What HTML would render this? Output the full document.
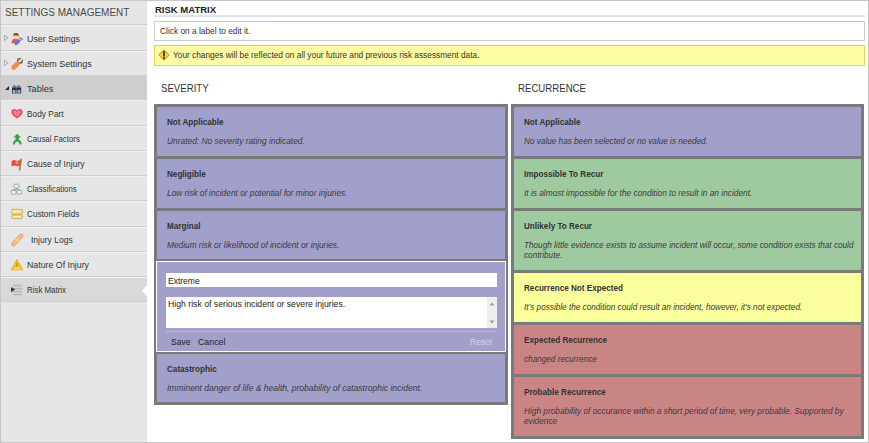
<!DOCTYPE html>
<html><head><meta charset="utf-8">
<style>
*{margin:0;padding:0;box-sizing:border-box}
html,body{width:869px;height:443px;overflow:hidden;background:#fff;font-family:"Liberation Sans",sans-serif;color:#333}
.a{position:absolute}
#frame{left:0;top:0;width:869px;height:443px;border:1px solid #c6c6c6;z-index:50;pointer-events:none}
#side{left:0;top:0;width:147px;height:443px;background:#e6e6e6}
.hd{left:5px;top:6px;font-size:10px;color:#4a4a4a;white-space:nowrap;line-height:14px}
.sep{left:1px;width:146px;height:1px;background:#cfcfcf}
.sepl{left:1px;width:146px;height:1px;background:#f0f0f0}
.row{left:1px;width:146px;background:#cecece}
.it{transform-origin:0 0;left:27px;font-size:9px;color:#333;white-space:nowrap;line-height:12px}
.ic{left:11px;width:12px;height:12px}
.tri{left:4px;width:5px;height:6px}
.title{left:155px;top:3.5px;font-size:9.5px;letter-spacing:0;font-weight:bold;color:#222;line-height:12px;white-space:nowrap}
.uline{left:154px;top:15px;width:711px;height:2px;background:#dbe4f3}
.box1{left:154px;top:21px;width:711px;height:20px;border:1px solid #cacaca;background:#fff}
.t1{left:160px;top:26px;font-size:8.35px;color:#333;line-height:11px;white-space:nowrap}
.notice{left:154px;top:45px;width:711px;height:21px;border:1px solid #e3d35a;background:#fdfba3}
.t2{left:173px;top:50px;font-size:8.3px;color:#333;line-height:11px;white-space:nowrap}
.h2{font-size:10.5px;transform:scaleX(0.918);transform-origin:0 0;color:#333;line-height:12px;white-space:nowrap;top:82px}
.panel{border:3px solid #7a7a7a;background:#7a7a7a}
.r{position:absolute;left:0;right:0}
.lav{background:#a0a0cb}.grn{background:#9fca9f}.yel{background:#fbfe9c}.red{background:#c98584}
.rt{position:absolute;left:10px;top:10px;font-size:8.15px;font-weight:bold;color:#333;line-height:11px;white-space:nowrap}
.rd{position:absolute;left:10px;right:3px;top:29.5px;font-size:8.2px;font-style:italic;color:#3a3a3a;line-height:10.4px}
.ed{font-size:8.5px;color:#222;line-height:10px;white-space:nowrap}
</style></head><body>
<div id="frame" class="a"></div>
<div id="side" class="a">
  <div class="a hd">SETTINGS MANAGEMENT</div>
  <div class="a sep" style="top:24px"></div><div class="a sepl" style="top:25px"></div>
  <div class="a sep" style="top:50px"></div><div class="a sepl" style="top:51px"></div>
  <div class="a sep" style="top:75px"></div>
  <div class="a row" style="top:76px;height:24px"></div>
  <div class="a sepl" style="top:100px"></div>
  <div class="a sep" style="top:125px"></div><div class="a sepl" style="top:126px"></div>
  <div class="a sep" style="top:150px"></div><div class="a sepl" style="top:151px"></div>
  <div class="a sep" style="top:175px"></div><div class="a sepl" style="top:176px"></div>
  <div class="a sep" style="top:200px"></div><div class="a sepl" style="top:201px"></div>
  <div class="a sep" style="top:226px"></div><div class="a sepl" style="top:227px"></div>
  <div class="a sep" style="top:251px"></div><div class="a sepl" style="top:252px"></div>
  <div class="a sep" style="top:276px"></div><div class="a sepl" style="top:277px"></div>
  <div class="a row" style="top:278px;height:23px;background:#d9d9d9"></div>
  <div class="a sep" style="top:301px"></div>

  <div class="a it" style="top:33px;transform:scaleX(0.981)">User Settings</div>
  <div class="a it" style="top:58px;transform:scaleX(0.994)">System Settings</div>
  <div class="a it" style="top:83px;transform:scaleX(1.015)">Tables</div>
  <div class="a it" style="top:108px;transform:scaleX(0.927)">Body Part</div>
  <div class="a it" style="top:133px;transform:scaleX(0.873)">Causal Factors</div>
  <div class="a it" style="top:158px;transform:scaleX(0.950)">Cause of Injury</div>
  <div class="a it" style="top:183px;transform:scaleX(0.863)">Classifications</div>
  <div class="a it" style="top:208px;transform:scaleX(0.910)">Custom Fields</div>
  <div class="a it" style="top:234px;left:31px;transform:scaleX(0.948)">Injury Logs</div>
  <div class="a it" style="top:259px;transform:scaleX(0.976)">Nature Of Injury</div>
  <div class="a it" style="top:284px;transform:scaleX(0.876)">Risk Matrix</div>

  <svg class="a" style="left:0;top:25px" width="30" height="24">
    <path d="M4.5 10.2 L8.2 12.9 L4.5 15.6 Z" fill="none" stroke="#a8a8a8" stroke-width="0.9"/>
    <path d="M19.8 12.6 L22.6 14.2 L19.8 15.8 Z" fill="none" stroke="#9a9a9a" stroke-width="1.1"/>
    <path d="M11.4 18.2 Q11.6 13.6 15.6 13.2 Q19.6 13.6 19.8 18.2 Z" fill="#e9525c"/>
    <circle cx="16" cy="12" r="2.3" fill="#f6cfa6"/>
    <path d="M13.2 11.4 Q13 8 16 8 Q19 8 18.8 11.4 Q17.5 9.6 16 10.4 Q14.5 9.6 13.2 11.4 Z" fill="#8a3a18"/>
    <path d="M16 18.6 L18.6 16" stroke="#4a80dc" stroke-width="3" stroke-linecap="round"/>
  </svg>
  <svg class="a" style="left:0;top:50px" width="30" height="24">
    <path d="M4.5 10.2 L8.2 12.9 L4.5 15.6 Z" fill="none" stroke="#a8a8a8" stroke-width="0.9"/>
    <circle cx="19.9" cy="10.9" r="2.3" fill="#d8d8d8" stroke="#5a5a5a" stroke-width="1.3"/>
    <path d="M20.5 10.3 L23 7.8" stroke="#e4e4e4" stroke-width="1.6"/>
    <path d="M13.6 17.6 L17.2 13.8" stroke="#f58a4e" stroke-width="4.8" stroke-linecap="round"/>
  </svg>
  <svg class="a" style="left:0;top:75px" width="30" height="25">
    <path d="M5 15 L9 11 L9 15 Z" fill="#2a2a2a"/>
    <path d="M12.3 13 Q12.6 10 14.4 10 Q16 10 16.3 11.6 L16.9 11.6 Q17.2 10 18.8 10 Q20.8 10 21 13 Z" fill="#6f86a0"/>
    <rect x="12" y="12.6" width="4.4" height="6" rx="0.5" fill="#34465a"/>
    <rect x="16.8" y="12.6" width="4.4" height="6" rx="0.5" fill="#34465a"/>
    <rect x="13" y="15" width="2.3" height="3" fill="#a4b8cc"/>
    <rect x="17.8" y="15" width="2.3" height="3" fill="#a4b8cc"/>
    <rect x="12.3" y="13.4" width="8.6" height="1" fill="#1c2430"/>
  </svg>
  <svg class="a" style="left:0;top:100px" width="30" height="25">
    <path d="M17 18.5 C14 16.5 11.3 14.5 11.3 12 C11.3 10 12.8 9 14.3 9 C15.6 9 16.5 9.8 17 10.6 C17.5 9.8 18.4 9 19.7 9 C21.2 9 22.7 10 22.7 12 C22.7 14.5 20 16.5 17 18.5 Z" fill="#ec4c5c"/>
    <path d="M17 16.5 C15 15 13.2 13.6 13.2 12.2 C13.2 11 14 10.5 14.8 10.5 C15.8 10.5 16.5 11.5 17 12.2 C17.5 11.5 18.2 10.5 19.2 10.5 C20 10.5 20.8 11 20.8 12.2 C20.8 13.6 19 15 17 16.5 Z" fill="#f6808c"/>
  </svg>
  <svg class="a" style="left:0;top:125px" width="30" height="25">
    <path d="M17.2 8.8 L21 12.6 L18.8 12.6 L18.8 14.6 Q21.6 16 21.6 19 L21.6 19.5 L19.4 19.5 L19.4 19 Q19.4 16.8 17.2 16.4 Q15 16.8 15 19 L15 19.5 L12.8 19.5 L12.8 19 Q12.8 16 15.6 14.6 L15.6 12.6 L13.4 12.6 Z" fill="#3f9e44"/>
  </svg>
  <svg class="a" style="left:0;top:150px" width="30" height="25">
    <path d="M11.6 11 Q14 9.5 16 10.5 Q18 11.3 20.5 9.5 L20.5 15 Q18 16.8 16 15.8 Q14 15 11.6 16.4 Z" fill="#ea4848"/>
    <path d="M15.5 11.5 L18.5 11 L18.5 14 L15.5 14.5 Z" fill="#f48a8a"/>
    <path d="M21.2 9.2 L19.6 19.8" stroke="#b0762a" stroke-width="1.6" stroke-linecap="round"/>
  </svg>
  <svg class="a" style="left:0;top:175px" width="30" height="25">
    <path d="M16.5 13 L16.5 14.6 M13.5 15.6 L13.5 14.6 L19.5 14.6 L19.5 15.6" stroke="#999" stroke-width="0.8" fill="none"/>
    <rect x="14" y="9.2" width="5" height="3.8" rx="0.6" fill="#e6f4f4" stroke="#86a8a8" stroke-width="0.9"/>
    <rect x="11.4" y="15.4" width="4.6" height="3.8" rx="0.6" fill="#e6f4f4" stroke="#86a8a8" stroke-width="0.9"/>
    <rect x="17" y="15.4" width="4.6" height="3.8" rx="0.6" fill="#e6f4f4" stroke="#86a8a8" stroke-width="0.9"/>
  </svg>
  <svg class="a" style="left:0;top:200px" width="30" height="25">
    <rect x="11.8" y="9.4" width="10.6" height="4.6" rx="0.8" fill="#f2ec98" stroke="#c8a068" stroke-width="0.9"/>
    <rect x="11.8" y="15" width="10.6" height="3.6" rx="0.8" fill="#f2ec98" stroke="#c8a068" stroke-width="0.9"/>
    <path d="M13.5 14 L14.2 15.6 L15 14 Z M13.5 18.6 L14.2 19.8 L15 18.6 Z" fill="#c8a068"/>
  </svg>
  <svg class="a" style="left:0;top:225px" width="30" height="25">
    <path d="M13.4 19.2 L21.2 11" stroke="#e9a274" stroke-width="4.6" stroke-linecap="round"/>
    <path d="M13.4 19.2 L21.2 11" stroke="#f3b88e" stroke-width="3" stroke-linecap="round"/>
    <rect x="15.6" y="13.4" width="3.4" height="3.4" transform="rotate(45 17.3 15.1)" fill="#f6d670"/>
  </svg>
  <svg class="a" style="left:0;top:250px" width="30" height="25">
    <path d="M17 9.6 L22.6 19.8 L11.4 19.8 Z" fill="#f6c428" stroke="#e4a020" stroke-width="0.8" stroke-linejoin="round"/>
    <path d="M17 12.8 L17 16.4" stroke="#c88a10" stroke-width="1.2"/>
    <path d="M13.4 18.8 L20.6 18.8" stroke="#fff4b0" stroke-width="0.8"/>
  </svg>
  <svg class="a" style="left:0;top:275px" width="30" height="25">
    <rect x="13" y="9.8" width="9" height="1.6" fill="#b8b8b8"/>
    <rect x="13" y="12.8" width="9" height="1.6" fill="#b8b8b8"/>
    <rect x="13" y="15.8" width="9" height="1.6" fill="#b8b8b8"/>
    <rect x="13" y="18.8" width="9" height="1.6" fill="#b8b8b8"/>
    <path d="M11 12 L15.2 14.6 L11 17.2 Z" fill="#3a3a3a"/>
  </svg>
  <svg class="a" style="left:142px;top:285px" width="5" height="11"><path d="M5 0 L0 5.5 L5 11 Z" fill="#fff"/></svg>
</div>

<div class="a title">RISK MATRIX</div>
<div class="a uline"></div>
<div class="a box1"></div>
<div class="a t1">Click on a label to edit it.</div>
<div class="a notice"></div>
<svg class="a" style="left:158px;top:49px" width="12" height="12">
  <path d="M6 0.8 L11.2 6 L6 11.2 L0.8 6 Z" fill="#f4d830" stroke="#a88818" stroke-width="0.9"/>
  <path d="M6 2.8 L6 7" stroke="#1e2030" stroke-width="1.6" stroke-linecap="round"/>
  <circle cx="6" cy="9" r="0.9" fill="#1e2030"/>
</svg>
<div class="a t2">Your changes will be reflected on all your future and previous risk assessment data.</div>

<div class="a h2" style="left:161px">SEVERITY</div>
<div class="a h2" style="left:518px">RECURRENCE</div>

<!-- severity -->
<div class="a panel" style="left:154px;top:104px;width:354px;height:301px">
  <div class="r lav" style="top:0;height:49px"><div class="rt">Not Applicable</div><div class="rd" style="font-size:8.4px;top:28.8px">Unrated: No severity rating indicated.</div></div>
  <div class="r lav" style="top:52px;height:49px"><div class="rt">Negligible</div><div class="rd" style="font-size:8.33px;top:28.8px">Low risk of incident or potential for minor injuries.</div></div>
  <div class="r lav" style="top:104px;height:48px"><div class="rt">Marginal</div><div class="rd" style="font-size:8.32px;top:28.8px">Medium risk or likelihood of incident or injuries.</div></div>
  <div class="r lav" style="top:154px;height:91px;border:1px solid #fff;left:-1px;right:-1px"></div>
  <div class="r lav" style="top:247px;height:48px"><div class="rt">Catastrophic</div><div class="rd" style="font-size:8.5px;top:28.8px">Imminent danger of life &amp; health, probability of catastrophic incident.</div></div>
</div>

<!-- recurrence -->
<div class="a panel" style="left:511px;top:104px;width:353px;height:335px">
  <div class="r lav" style="top:0;height:49px"><div class="rt">Not Applicable</div><div class="rd">No value has been selected or no value is needed.</div></div>
  <div class="r grn" style="top:52px;height:49px"><div class="rt">Impossible To Recur</div><div class="rd" style="font-size:8.32px;top:28.8px">It is almost impossible for the condition to result in an incident.</div></div>
  <div class="r grn" style="top:104px;height:59px"><div class="rt">Unlikely To Recur</div><div class="rd">Though little evidence exists to assume incident will occur, some condition exists that could contribute.</div></div>
  <div class="r yel" style="top:166px;height:49px"><div class="rt">Recurrence Not Expected</div><div class="rd">It’s possible the condition could result an incident, however, it’s not expected.</div></div>
  <div class="r red" style="top:218px;height:49px"><div class="rt">Expected Recurrence</div><div class="rd">changed recurrence</div></div>
  <div class="r red" style="top:270px;height:59px"><div class="rt">Probable Recurrence</div><div class="rd" style="font-size:8.3px;top:28.8px">High probability of occurance within a short period of time, very probable. Supported by evidence</div></div>
</div>

<!-- edit row content -->
<div class="a" style="left:166px;top:273px;width:331px;height:14px;background:#fff"></div>
<div class="a ed" style="left:168px;top:276px">Extreme</div>
<div class="a" style="left:166px;top:297px;width:331px;height:31px;background:#fff"></div>
<div class="a ed" style="left:168px;top:299px;font-size:8.7px">High risk of serious incident or severe injuries.</div>
<div class="a" style="left:487px;top:297px;width:10px;height:31px;background:#eeeeee"></div>
<svg class="a" style="left:488px;top:301px" width="8" height="24"><path d="M1.5 4.5 L4 1.5 L6.5 4.5 Z" fill="#9a9a9a"/><path d="M1.5 19.5 L4 22.5 L6.5 19.5 Z" fill="#9a9a9a"/></svg>
<div class="a" style="left:166px;top:331px;width:331px;height:1px;background:#a9c4e6"></div>
<div class="a ed" style="left:171px;top:337px">Save</div>
<div class="a ed" style="left:198px;top:337px;font-size:8.8px">Cancel</div>
<div class="a ed" style="left:470px;top:337px;color:#d4d4ea">Reset</div>
</body></html>
